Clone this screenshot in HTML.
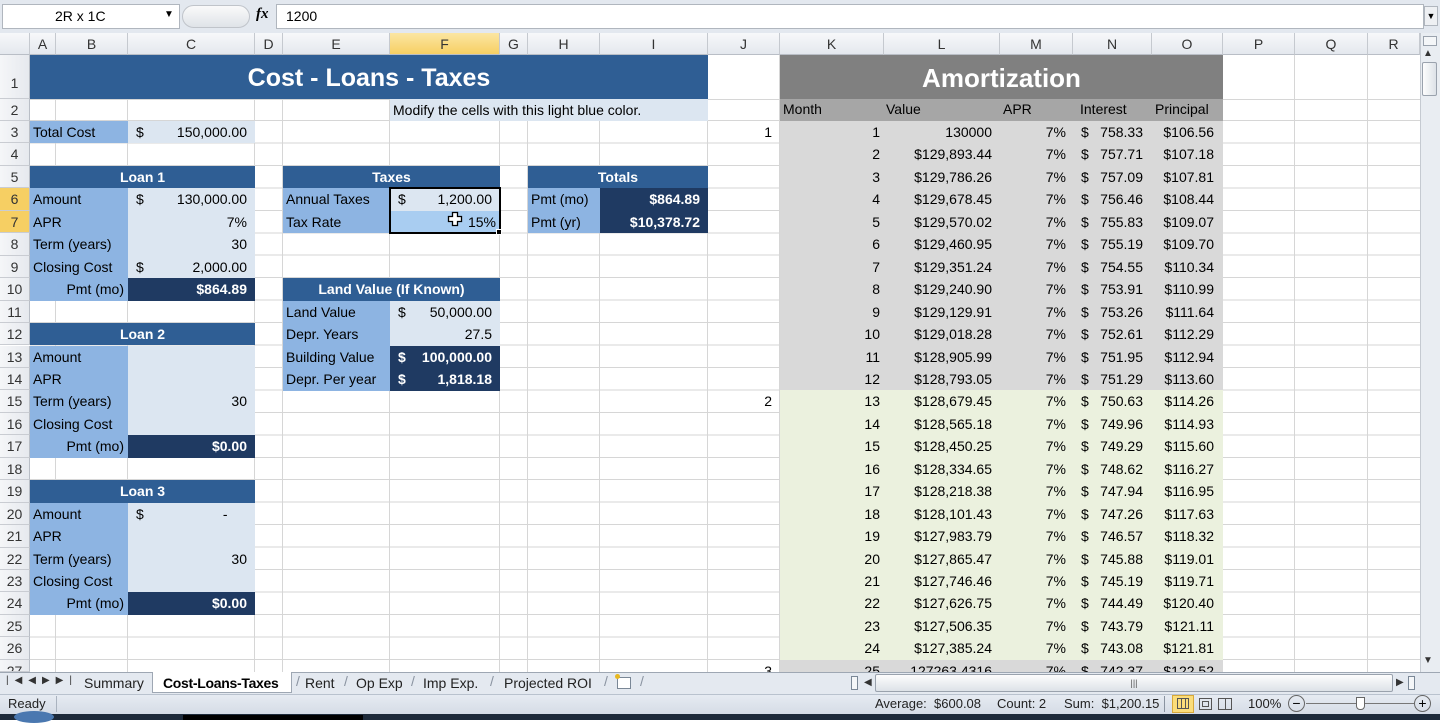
<!DOCTYPE html>
<html><head><meta charset="utf-8"><style>
*{margin:0;padding:0;box-sizing:border-box}
body{width:1440px;height:720px;overflow:hidden;background:#fff;position:relative;font-family:"Liberation Sans",sans-serif;font-size:14px;color:#000}
.a{position:absolute}
.c{position:absolute;height:22.45px;line-height:22.45px;white-space:nowrap;overflow:hidden;padding:0 3px}
.r{text-align:right;padding-right:8px}
.ctr{text-align:center}
.hd{background:#2f5e94;color:#fff;font-weight:bold;text-align:center}
.lb{background:#8db4e2}
.lt{background:#dce6f1}
.dk{background:#1f3a62;color:#fff;font-weight:bold}
.w{color:#fff}
.vl{position:absolute;top:55px;height:617px;width:1px;background:#d6d6d6}
.ch{position:absolute;top:33px;height:22px;line-height:22px;text-align:center;background:linear-gradient(#f7f8fa,#e4e8ee);border-right:1px solid #c5c9cf;border-bottom:1px solid #b9bec6;color:#333;font-size:14px}
.rh{position:absolute;left:0;width:30px;text-align:center;background:linear-gradient(90deg,#f5f6f8,#e6e9ee);border-right:1px solid #b9bec6;border-bottom:1px solid #c9ccd2;color:#333;font-size:14px}
.ar{position:absolute;left:780px;width:443px;height:22.45px;line-height:22.45px;font-size:14px}
.ar b{font-weight:normal;position:absolute;top:0;text-align:right}
.ar b:nth-child(1){left:0;width:100px}
.ar b:nth-child(2){left:104px;width:108px}
.ar b:nth-child(3){left:220px;width:66px}
.ar b:nth-child(4){left:293px;width:70px}
.ar b:nth-child(5){left:372px;width:62px}
.ar i{font-style:normal;position:absolute;left:8px}
</style></head><body>
<!-- formula bar -->
<div class="a" style="left:0;top:0;width:1440px;height:33px;background:#e3e8ef"></div>
<div class="a" style="left:2px;top:4px;width:178px;height:25px;background:#fff;border:1px solid #b0b6be"></div>
<div class="a" style="left:55px;top:8px;font-size:14px">2R x 1C</div>
<div class="a" style="left:164px;top:9px;font-size:10px">▼</div>
<div class="a" style="left:182px;top:5px;width:68px;height:23px;border-radius:12px;background:linear-gradient(#fafafa,#dfe3e8);border:1px solid #c0c4ca"></div>
<div class="a" style="left:256px;top:6px;font-family:'Liberation Serif',serif;font-style:italic;font-weight:bold;font-size:15px">fx</div>
<div class="a" style="left:276px;top:4px;width:1148px;height:25px;background:#fff;border:1px solid #b0b6be"></div>
<div class="a" style="left:286px;top:8px">1200</div>
<div class="a" style="left:1424px;top:6px;width:14px;height:20px;background:#eef0f3;border:1px solid #b0b6be;font-size:9px;text-align:center;line-height:18px">▼</div>
<!-- column headers -->
<div class="ch" style="left:0;width:30px"></div>
<div class="ch" style="left:30px;width:26px">A</div>
<div class="ch" style="left:56px;width:72px">B</div>
<div class="ch" style="left:128px;width:127px">C</div>
<div class="ch" style="left:255px;width:28px">D</div>
<div class="ch" style="left:283px;width:107px">E</div>
<div class="ch" style="left:390px;width:110px;background:linear-gradient(#fbe6a2,#f6cf63)">F</div>
<div class="ch" style="left:500px;width:28px">G</div>
<div class="ch" style="left:528px;width:72px">H</div>
<div class="ch" style="left:600px;width:108px">I</div>
<div class="ch" style="left:708px;width:72px">J</div>
<div class="ch" style="left:780px;width:104px">K</div>
<div class="ch" style="left:884px;width:116px">L</div>
<div class="ch" style="left:1000px;width:73px">M</div>
<div class="ch" style="left:1073px;width:79px">N</div>
<div class="ch" style="left:1152px;width:71px">O</div>
<div class="ch" style="left:1223px;width:72px">P</div>
<div class="ch" style="left:1295px;width:73px">Q</div>
<div class="ch" style="left:1368px;width:52px">R</div>
<!-- gridlines -->
<div class="a" style="left:30px;top:99px;width:1390px;height:1px;background:#d6d6d6"></div>
<div class="a" style="left:30px;top:120px;width:1390px;height:552px;background:repeating-linear-gradient(to bottom,#d6d6d6 0 1px,transparent 1px 22.45px)"></div>
<div class="vl" style="left:55px"></div><div class="vl" style="left:127px"></div><div class="vl" style="left:254px"></div><div class="vl" style="left:282px"></div><div class="vl" style="left:389px"></div><div class="vl" style="left:499px"></div><div class="vl" style="left:527px"></div><div class="vl" style="left:599px"></div><div class="vl" style="left:707px"></div><div class="vl" style="left:779px"></div><div class="vl" style="left:883px"></div><div class="vl" style="left:999px"></div><div class="vl" style="left:1072px"></div><div class="vl" style="left:1151px"></div><div class="vl" style="left:1222px"></div><div class="vl" style="left:1294px"></div><div class="vl" style="left:1367px"></div>
<!-- row headers -->
<div class="rh" style="top:55px;height:44px;line-height:56px">1</div>
<div class="rh" style="top:99px;height:22px;line-height:22px">2</div>
<div class="rh" style="top:121px;height:22.45px;line-height:22px">3</div>
<div class="rh" style="top:143.45px;height:22.45px;line-height:22px">4</div>
<div class="rh" style="top:165.9px;height:22.45px;line-height:22px">5</div>
<div class="rh" style="top:188.35px;height:22.45px;line-height:22px;background:#f6cf63">6</div>
<div class="rh" style="top:210.8px;height:22.45px;line-height:22px;background:#f6cf63">7</div>
<div class="rh" style="top:233.25px;height:22.45px;line-height:22px">8</div>
<div class="rh" style="top:255.7px;height:22.45px;line-height:22px">9</div>
<div class="rh" style="top:278.15px;height:22.45px;line-height:22px">10</div>
<div class="rh" style="top:300.6px;height:22.45px;line-height:22px">11</div>
<div class="rh" style="top:323.05px;height:22.45px;line-height:22px">12</div>
<div class="rh" style="top:345.5px;height:22.45px;line-height:22px">13</div>
<div class="rh" style="top:367.95px;height:22.45px;line-height:22px">14</div>
<div class="rh" style="top:390.4px;height:22.45px;line-height:22px">15</div>
<div class="rh" style="top:412.85px;height:22.45px;line-height:22px">16</div>
<div class="rh" style="top:435.3px;height:22.45px;line-height:22px">17</div>
<div class="rh" style="top:457.75px;height:22.45px;line-height:22px">18</div>
<div class="rh" style="top:480.2px;height:22.45px;line-height:22px">19</div>
<div class="rh" style="top:502.65px;height:22.45px;line-height:22px">20</div>
<div class="rh" style="top:525.1px;height:22.45px;line-height:22px">21</div>
<div class="rh" style="top:547.55px;height:22.45px;line-height:22px">22</div>
<div class="rh" style="top:570px;height:22.45px;line-height:22px">23</div>
<div class="rh" style="top:592.45px;height:22.45px;line-height:22px">24</div>
<div class="rh" style="top:614.9px;height:22.45px;line-height:22px">25</div>
<div class="rh" style="top:637.35px;height:22.45px;line-height:22px">26</div>
<div class="rh" style="top:659.8px;height:12.2px;line-height:22px;overflow:hidden">27</div>

<!-- title -->
<div class="a hd" style="left:30px;top:55px;width:678px;height:44px;line-height:46px;font-size:25px">Cost - Loans - Taxes</div>
<div class="c lt" style="left:390px;top:99px;width:318px;height:22px;line-height:22px">Modify the cells with this light blue color.</div>
<!-- Total cost -->
<div class="c lb" style="left:30px;top:121px;width:98px">Total Cost</div>
<div class="c lt r" style="left:128px;top:121px;width:127px">150,000.00</div><div class="c" style="left:133px;top:121px">$</div>
<!-- Loan 1 -->
<div class="c hd" style="left:30px;top:165.9px;width:225px">Loan 1</div>
<div class="c lb" style="left:30px;top:188.35px;width:98px;height:90px;line-height:22.45px">Amount<br>APR<br>Term (years)<br>Closing Cost</div>
<div class="c lt r" style="left:128px;top:188.35px;width:127px;height:90px;line-height:22.45px">130,000.00<br>7%<br>30<br>2,000.00</div>
<div class="c" style="left:133px;top:188.35px">$</div><div class="c" style="left:133px;top:255.7px">$</div>
<div class="c lb r" style="left:30px;top:278.15px;width:98px;padding-right:4px">Pmt (mo)</div>
<div class="c dk r" style="left:128px;top:278.15px;width:127px">$864.89</div>
<!-- Loan 2 -->
<div class="c hd" style="left:30px;top:323.05px;width:225px">Loan 2</div>
<div class="c lb" style="left:30px;top:345.5px;width:98px;height:90px;line-height:22.45px">Amount<br>APR<br>Term (years)<br>Closing Cost</div>
<div class="c lt r" style="left:128px;top:345.5px;width:127px;height:90px;line-height:22.45px"><br><br>30<br></div>
<div class="c lb r" style="left:30px;top:435.3px;width:98px;padding-right:4px">Pmt (mo)</div>
<div class="c dk r" style="left:128px;top:435.3px;width:127px">$0.00</div>
<!-- Loan 3 -->
<div class="c hd" style="left:30px;top:480.2px;width:225px">Loan 3</div>
<div class="c lb" style="left:30px;top:502.65px;width:98px;height:90px;line-height:22.45px">Amount<br>APR<br>Term (years)<br>Closing Cost</div>
<div class="c lt r" style="left:128px;top:502.65px;width:127px;height:90px;line-height:22.45px">-&nbsp;&nbsp;&nbsp;&nbsp;&nbsp;<br><br>30<br></div>
<div class="c" style="left:133px;top:502.65px">$</div>
<div class="c lb r" style="left:30px;top:592.45px;width:98px;padding-right:4px">Pmt (mo)</div>
<div class="c dk r" style="left:128px;top:592.45px;width:127px">$0.00</div>
<!-- Taxes -->
<div class="c hd" style="left:283px;top:165.9px;width:217px">Taxes</div>
<div class="c lb" style="left:283px;top:188.35px;width:107px;height:45px;line-height:22.45px">Annual Taxes<br>Tax Rate</div>
<div class="c lt r" style="left:390px;top:188.35px;width:110px">1,200.00</div><div class="c" style="left:395px;top:188.35px">$</div>
<div class="c r" style="left:390px;top:210.8px;width:110px;background:#a9cdf1;padding-right:4px">15%</div>
<div class="a" style="left:389px;top:186.5px;width:112px;height:47px;border:2px solid #000"></div>
<div class="a" style="left:496px;top:229px;width:6px;height:6px;background:#000;border:1px solid #fff"></div>
<div class="a" style="left:447px;top:211px;width:16px;height:16px">
<svg width="16" height="16" viewBox="0 0 16 16"><path d="M5.5 1.5h5v4h4v5h-4v4h-5v-4h-4v-5h4z" fill="#fff" stroke="#000" stroke-width="1.3"/></svg></div>
<!-- Totals -->
<div class="c hd" style="left:528px;top:165.9px;width:180px">Totals</div>
<div class="c lb" style="left:528px;top:188.35px;width:72px;height:45px;line-height:22.45px">Pmt (mo)<br>Pmt (yr)</div>
<div class="c dk r" style="left:600px;top:188.35px;width:108px;height:45px;line-height:22.45px">$864.89<br>$10,378.72</div>
<!-- Land value -->
<div class="c hd" style="left:283px;top:278.15px;width:217px">Land Value (If Known)</div>
<div class="c lb" style="left:283px;top:300.6px;width:107px;height:90px;line-height:22.45px">Land Value<br>Depr. Years<br>Building Value<br>Depr. Per year</div>
<div class="c lt r" style="left:390px;top:300.6px;width:110px;height:45px;line-height:22.45px">50,000.00<br>27.5</div>
<div class="c dk r" style="left:390px;top:345.5px;width:110px;height:45px;line-height:22.45px">100,000.00<br>1,818.18</div>
<div class="c" style="left:395px;top:300.6px">$</div><div class="c w" style="left:395px;top:345.5px;font-weight:bold">$</div><div class="c w" style="left:395px;top:367.95px;font-weight:bold">$</div>

<!-- Amortization -->
<div class="a" style="left:780px;top:55px;width:443px;height:44px;background:#808080;color:#fff;font-weight:bold;font-size:26px;text-align:center;line-height:46px">Amortization</div>
<div class="a" style="left:780px;top:99px;width:443px;height:22px;background:#a6a6a6"></div>
<div class="a" style="left:783px;top:101px">Month</div><div class="a" style="left:886px;top:101px">Value</div><div class="a" style="left:1003px;top:101px">APR</div><div class="a" style="left:1080px;top:101px">Interest</div><div class="a" style="left:1155px;top:101px">Principal</div>
<div class="a" style="left:780px;top:121px;width:443px;height:269.4px;background:#d9d9d9"></div>
<div class="a" style="left:780px;top:390.4px;width:443px;height:269.4px;background:#ebf1de"></div>
<div class="a" style="left:780px;top:659.8px;width:443px;height:12.2px;background:#d9d9d9"></div>
<div class="c r" style="left:708px;top:121px;width:72px">1</div>
<div class="c r" style="left:708px;top:390.4px;width:72px">2</div>
<div class="a" style="left:708px;top:659.8px;width:72px;height:12.2px;overflow:hidden"><div class="c r" style="left:0;top:0;width:72px">3</div></div>

<div class="ar" style="top:121px"><b>1</b><b>130000</b><b>7%</b><b><i>$</i>758.33</b><b>$106.56</b></div>
<div class="ar" style="top:143.45px"><b>2</b><b>$129,893.44</b><b>7%</b><b><i>$</i>757.71</b><b>$107.18</b></div>
<div class="ar" style="top:165.9px"><b>3</b><b>$129,786.26</b><b>7%</b><b><i>$</i>757.09</b><b>$107.81</b></div>
<div class="ar" style="top:188.35px"><b>4</b><b>$129,678.45</b><b>7%</b><b><i>$</i>756.46</b><b>$108.44</b></div>
<div class="ar" style="top:210.8px"><b>5</b><b>$129,570.02</b><b>7%</b><b><i>$</i>755.83</b><b>$109.07</b></div>
<div class="ar" style="top:233.25px"><b>6</b><b>$129,460.95</b><b>7%</b><b><i>$</i>755.19</b><b>$109.70</b></div>
<div class="ar" style="top:255.7px"><b>7</b><b>$129,351.24</b><b>7%</b><b><i>$</i>754.55</b><b>$110.34</b></div>
<div class="ar" style="top:278.15px"><b>8</b><b>$129,240.90</b><b>7%</b><b><i>$</i>753.91</b><b>$110.99</b></div>
<div class="ar" style="top:300.6px"><b>9</b><b>$129,129.91</b><b>7%</b><b><i>$</i>753.26</b><b>$111.64</b></div>
<div class="ar" style="top:323.05px"><b>10</b><b>$129,018.28</b><b>7%</b><b><i>$</i>752.61</b><b>$112.29</b></div>
<div class="ar" style="top:345.5px"><b>11</b><b>$128,905.99</b><b>7%</b><b><i>$</i>751.95</b><b>$112.94</b></div>
<div class="ar" style="top:367.95px"><b>12</b><b>$128,793.05</b><b>7%</b><b><i>$</i>751.29</b><b>$113.60</b></div>
<div class="ar" style="top:390.4px"><b>13</b><b>$128,679.45</b><b>7%</b><b><i>$</i>750.63</b><b>$114.26</b></div>
<div class="ar" style="top:412.85px"><b>14</b><b>$128,565.18</b><b>7%</b><b><i>$</i>749.96</b><b>$114.93</b></div>
<div class="ar" style="top:435.3px"><b>15</b><b>$128,450.25</b><b>7%</b><b><i>$</i>749.29</b><b>$115.60</b></div>
<div class="ar" style="top:457.75px"><b>16</b><b>$128,334.65</b><b>7%</b><b><i>$</i>748.62</b><b>$116.27</b></div>
<div class="ar" style="top:480.2px"><b>17</b><b>$128,218.38</b><b>7%</b><b><i>$</i>747.94</b><b>$116.95</b></div>
<div class="ar" style="top:502.65px"><b>18</b><b>$128,101.43</b><b>7%</b><b><i>$</i>747.26</b><b>$117.63</b></div>
<div class="ar" style="top:525.1px"><b>19</b><b>$127,983.79</b><b>7%</b><b><i>$</i>746.57</b><b>$118.32</b></div>
<div class="ar" style="top:547.55px"><b>20</b><b>$127,865.47</b><b>7%</b><b><i>$</i>745.88</b><b>$119.01</b></div>
<div class="ar" style="top:570px"><b>21</b><b>$127,746.46</b><b>7%</b><b><i>$</i>745.19</b><b>$119.71</b></div>
<div class="ar" style="top:592.45px"><b>22</b><b>$127,626.75</b><b>7%</b><b><i>$</i>744.49</b><b>$120.40</b></div>
<div class="ar" style="top:614.9px"><b>23</b><b>$127,506.35</b><b>7%</b><b><i>$</i>743.79</b><b>$121.11</b></div>
<div class="ar" style="top:637.35px"><b>24</b><b>$127,385.24</b><b>7%</b><b><i>$</i>743.08</b><b>$121.81</b></div>
<div class="a" style="left:780px;top:659.8px;width:443px;height:12.2px;overflow:hidden"><div class="ar" style="left:0;top:0"><b>25</b><b>127263.4316</b><b>7%</b><b><i>$</i>742.37</b><b>$122.52</b></div></div>

<!-- vertical scrollbar -->
<div class="a" style="left:1420px;top:33px;width:20px;height:639px;background:#e9edf2;border-left:1px solid #c5cad1"></div>
<div class="a" style="left:1423px;top:36px;width:14px;height:10px;border:1px solid #9aa2ad;background:#f4f6f8"></div>
<div class="a" style="left:1423px;top:48px;font-size:10px;color:#333">▲</div>
<div class="a" style="left:1422px;top:62px;width:15px;height:34px;border:1px solid #9aa2ad;border-radius:2px;background:linear-gradient(90deg,#fdfdfd,#dde2e8)"></div>
<div class="a" style="left:1423px;top:655px;font-size:10px;color:#333">▼</div>
<!-- tab bar -->
<div class="a" style="left:0;top:672px;width:1440px;height:22px;background:#e4e9f0;border-top:1px solid #9ea7b3"></div>
<div class="a" style="left:6px;top:675px;font-size:10px;color:#333;letter-spacing:6px">|◀◀▶▶|</div>
<div class="a" style="left:70px;top:673px;width:84px;height:20px;border-right:1px solid #9ea7b3"></div>
<div class="a" style="left:84px;top:675px;color:#222">Summary</div>
<div class="a" style="left:152px;top:672px;width:140px;height:21px;background:#fff;border:1px solid #9ea7b3;border-top:none"></div>
<div class="a" style="left:163px;top:675px;font-weight:bold;letter-spacing:-0.3px">Cost-Loans-Taxes</div>
<div class="a" style="left:305px;top:675px;color:#222">Rent</div>
<div class="a" style="left:356px;top:675px;color:#222">Op Exp</div>
<div class="a" style="left:423px;top:675px;color:#222">Imp Exp.</div>
<div class="a" style="left:504px;top:675px;color:#222">Projected ROI</div>
<div class="a" style="left:296px;top:673px;color:#8a93a0;font-size:14px">/</div>
<div class="a" style="left:344px;top:673px;color:#8a93a0">/</div>
<div class="a" style="left:411px;top:673px;color:#8a93a0">/</div>
<div class="a" style="left:490px;top:673px;color:#8a93a0">/</div>
<div class="a" style="left:604px;top:673px;color:#8a93a0">/</div>
<div class="a" style="left:617px;top:677px;width:14px;height:12px;border:1px solid #7a8796;background:#fff"></div>
<div class="a" style="left:615px;top:674px;width:5px;height:5px;background:#e8b820;border-radius:50%"></div>
<div class="a" style="left:640px;top:673px;color:#8a93a0">/</div>
<div class="a" style="left:851px;top:676px;width:7px;height:14px;border:1px solid #7a8796;background:#f4f6f8"></div>
<div class="a" style="left:864px;top:677px;font-size:10px;color:#333">◀</div>
<div class="a" style="left:875px;top:674px;width:518px;height:18px;border:1px solid #9aa2ad;border-radius:2px;background:linear-gradient(#fdfdfd,#dde2e8);text-align:center;font-size:9px;line-height:16px;color:#555">|||</div>
<div class="a" style="left:1396px;top:677px;font-size:10px;color:#333">▶</div>
<div class="a" style="left:1408px;top:676px;width:7px;height:14px;border:1px solid #7a8796;background:#f4f6f8"></div>
<!-- status bar -->
<div class="a" style="left:0;top:694px;width:1440px;height:20px;background:linear-gradient(#e6ebf2,#d5dce6);border-top:1px solid #b9c2ce"></div>
<div class="a" style="left:8px;top:696px;font-size:13px;color:#222">Ready</div>
<div class="a" style="left:56px;top:696px;width:1px;height:16px;background:#aab3bf"></div>
<div class="a" style="left:875px;top:696px;font-size:13px;color:#222">Average:&nbsp; $600.08</div>
<div class="a" style="left:997px;top:696px;font-size:13px;color:#222">Count: 2</div>
<div class="a" style="left:1064px;top:696px;font-size:13px;color:#222">Sum:&nbsp; $1,200.15</div>
<div class="a" style="left:1164px;top:696px;width:1px;height:16px;background:#8a93a0"></div>
<div class="a" style="left:1172px;top:695px;width:22px;height:18px;background:#fbdd7a;border:1px solid #d8a93a"></div>
<div class="a" style="left:1177px;top:698px;width:12px;height:11px;border:1px solid #555;background:repeating-linear-gradient(90deg,transparent 0 3px,#555 3px 4px)"></div>
<div class="a" style="left:1199px;top:698px;width:13px;height:12px;border:1px solid #555"></div>
<div class="a" style="left:1202px;top:701px;width:7px;height:6px;border:1px solid #555"></div>
<div class="a" style="left:1218px;top:698px;width:14px;height:12px;border:1px solid #555;background:linear-gradient(90deg,transparent 6px,#555 6px 7px,transparent 7px)"></div>
<div class="a" style="left:1248px;top:696px;font-size:13px;color:#222">100%</div>
<div class="a" style="left:1288px;top:695px;width:17px;height:17px;border:1px solid #666;border-radius:50%;text-align:center;line-height:14px;font-size:14px">−</div>
<div class="a" style="left:1306px;top:703px;width:108px;height:1px;background:#777"></div>
<div class="a" style="left:1356px;top:697px;width:9px;height:13px;background:#fff;border:1px solid #666;border-radius:0 0 4px 4px"></div>
<div class="a" style="left:1414px;top:695px;width:17px;height:17px;border:1px solid #666;border-radius:50%;text-align:center;line-height:15px;font-size:14px">+</div>
<!-- taskbar strip -->
<div class="a" style="left:0;top:714px;width:1440px;height:6px;background:#1d2a3a"></div>
<div class="a" style="left:14px;top:711px;width:40px;height:12px;border-radius:50%;background:#4a78b0"></div>
<div class="a" style="left:183px;top:715px;width:180px;height:5px;background:#000"></div>
</body></html>
